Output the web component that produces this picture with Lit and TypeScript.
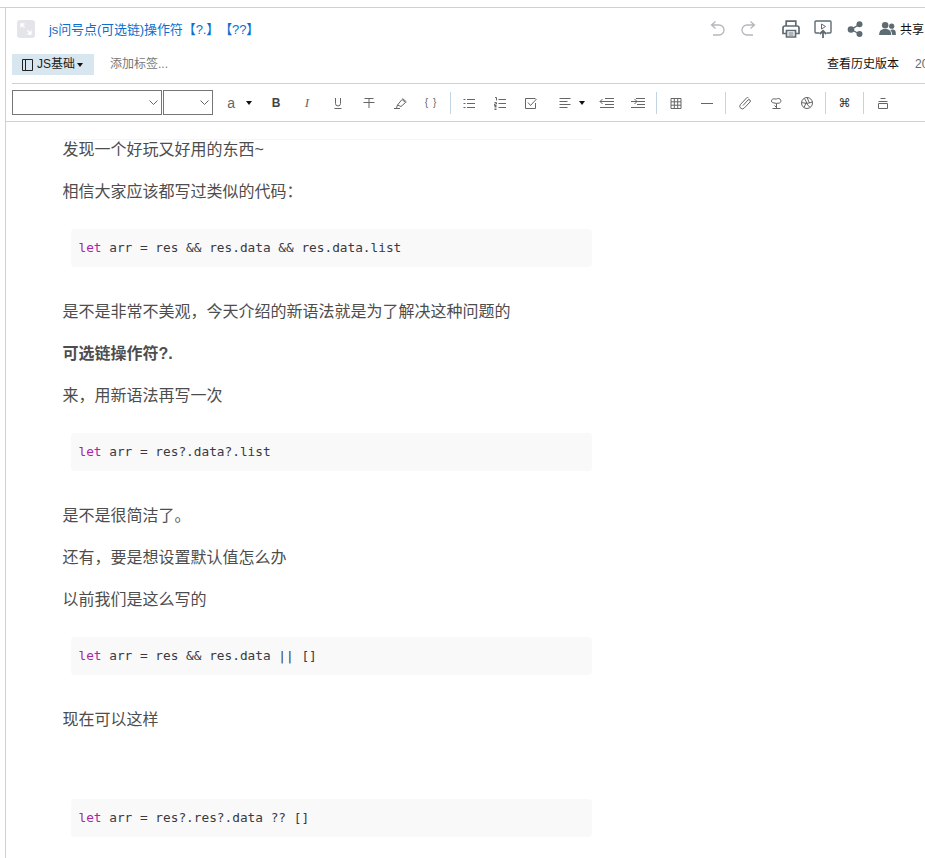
import { LitElement, css, html, svg } from 'lit';
import { customElement } from 'lit/decorators.js';

const icon = (body: unknown, w = 14, h = 14) => html`<svg width=${w} height=${h} viewBox="0 0 ${w} ${h}" fill="none" stroke="currentColor" stroke-width="1">${body}</svg>`;

const icons = {
  bold: html`<span class="glyph bold">B</span>`,
  italic: html`<span class="glyph italic">I</span>`,
  under: icon(svg`<path d="M4.500 2v5.500a2.500 2.500 0 0 0 5 0V2M3.500 12.500h7"/>`),
  strike: icon(svg`<path d="M2.500 2.500h9M7 2.500v9.500M1.500 6.500h11"/>`),
  marker: icon(svg`<path d="M4.500 9l4.500-5.500 3.500 3L8 10.500zM9.500 2.500l4 3.500M1 12.500h6M4.500 9L3.500 12"/>`),
  braces: html`<span class="glyph braces">{ }</span>`,
  ul: icon(svg`<path d="M5 3.500h8M5 7.500h8M5 11.500h8M1.500 3.500h2M1.500 7.500h2M1.500 11.500h2"/>`),
  ol: icon(svg`<path d="M5.500 3.500h7.500M5.500 7.500h7.500M5.500 11.500h7.500M2 1.500h1.500v3M1.500 6.500h2v1.500h-2v1.500h2M1.500 10.500h2M1.500 12h2M1.500 13.500h2"/>`),
  check: icon(svg`<path d="M11.500 2.500H1.500v10h10V7M4 6.500l2.500 3 6-6.500"/>`),
  align: icon(svg`<path d="M1.500 2.500h11M1.500 5.500h8M1.500 8.500h11M1.500 11.500h8"/>`),
  outdent: icon(svg`<path d="M6 2.500h9M6 8.500h9M1 11.500h14M1 5.500h14M3.500 3L1 5.500 3.500 8"/>`, 16, 14),
  indent: icon(svg`<path d="M6 2.500h9M7 8.500h8M1 11.500h14M1 5.500h14M4.500 3L7 5.500 4.500 8"/>`, 16, 14),
  table: icon(svg`<path d="M2 2.500h10v10H2zM2 5.800h10M2 9.200h10M5.300 2.500v10M8.700 2.500v10"/>`),
  rule: icon(svg`<path d="M1 7.500h12"/>`),
  clip: icon(svg`<path d="M5 9.500L10 4a1.400 1.400 0 0 1 2 2L6 12.300a2.600 2.600 0 0 1-3.700-3.600L8.500 2a1.400 1.400 0 0 1 2 0"/>`),
  image: icon(svg`<path d="M2.500 5C2.500 3 4.500 2.500 6 3s3.500-1.500 5 0 1 3.500-.5 4-4 .5-5.500 0S2.500 6.500 2.500 5zM7.500 7.500v4.500M3.500 12.500h8M5.500 9.500L7.500 11.500"/>`),
  film: icon(svg`<circle cx="7" cy="7" r="5.500"/><path d="M7 1.500L9.500 7M12.500 6L7 7.500M10 11.500L6.500 7.500M4 11.500L6.500 6M1.500 6.500L7 7.500M4.500 2.500L7 7"/>`),
  cmd: html`<span class="glyph cmd">⌘</span>`,
  stack: icon(svg`<path d="M4.500 2.500h5M2.500 5.500h9M2.500 7.500h9v5h-9z"/>`),
};

const caret = html`<span class="caret"></span>`;
const tools = (list: unknown[]) => list.map((i) => html`<button class="tool">${i}</button>`);

const groups: unknown[][] = [
  [html`<button class="tool wide font-color"><span class="glyph a">a</span>${caret}</button>`,
    ...tools([icons.bold, icons.italic, icons.under, icons.strike, icons.marker, icons.braces])],
  [...tools([icons.ul, icons.ol, icons.check]),
    html`<button class="tool wide align">${icons.align}${caret}</button>`,
    ...tools([icons.outdent, icons.indent])],
  tools([icons.table, icons.rule]),
  tools([icons.clip, icons.image, icons.film]),
  tools([icons.cmd]),
  tools([icons.stack]),
];

const code = (rest: string) => html`<pre class="code"><code><span class="kw">let</span> ${rest}</code></pre>`;

const dropdown = (cls: string) => html`
  <span class="dropdown ${cls}">
    <select><option></option></select>
    <svg width="9" height="6" viewBox="0 0 9 6" fill="none" stroke="#666" stroke-width="1"><path d="M.5.500l4 4 4-4"/></svg>
  </span>
`;

@customElement('app-root')
export class AppRoot extends LitElement {
  override render() {
    return html`
      <div class="page">
        <div class="frame">
          <header class="title-row">
            <span class="expand">
              <svg width="18" height="18" viewBox="0 0 18 18" fill="none" stroke="#fff" stroke-width="1.300"><path d="M4 4l3.500 3.500M10.500 10.500L14 14M4 7.500V4h3.500M14 10.500V14h-3.500"/></svg>
            </span>
            <span class="title">js问号点(可选链)操作符【?.】【??】</span>
            <div class="actions">
              <svg class="undo" width="18" height="18" viewBox="0 0 18 18" fill="none" stroke="#b3b6bd" stroke-width="1.300"><path d="M6.500 1.500L2.500 5l4 3.500M3 5h7a5 5 0 0 1 0 10H4"/></svg>
              <svg class="redo" width="18" height="18" viewBox="0 0 18 18" fill="none" stroke="#b3b6bd" stroke-width="1.300"><path d="M11.500 1.500l4 3.500-4 3.500M15 5H8a5 5 0 0 0 0 10h6"/></svg>
              <svg class="print" width="18" height="18" viewBox="0 0 18 18" fill="none" stroke="#5f6b73" stroke-width="1.700"><path d="M4.200 6V1.200h9.600V6"/><path d="M4 13.500H1V8a2 2 0 0 1 2-2h12a2 2 0 0 1 2 2v5.500h-3"/><path d="M4.500 10.500h9v6.500h-9z"/><path d="M6.500 13h5M6.500 15h5" stroke-width="1"/></svg>
              <svg class="present" width="18" height="18" viewBox="0 0 18 18" fill="none" stroke="#5f6b73" stroke-width="1.400"><path d="M5.500 13H2a1 1 0 0 1-1-1V2a1 1 0 0 1 1-1h14a1 1 0 0 1 1 1v10a1 1 0 0 1-1 1h-3.500"/><path d="M7.500 4v5l4-2.500z" stroke-width="1"/><path d="M9 18v-6.500M5.800 14L9 10.800l3.200 3.200" stroke-width="1.800"/></svg>
              <svg class="share" width="16" height="16" viewBox="0 0 16 16" fill="#5f6b73"><circle cx="4" cy="8.500" r="3.300"/><circle cx="12.500" cy="3.300" r="3"/><circle cx="12.500" cy="13" r="3"/><path d="M4 8.500l8.500-5.200M4 8.500l8.500 4.500" stroke="#5f6b73" stroke-width="1.400"/></svg>
              <span class="share-label">
                <svg width="17" height="13" viewBox="0 0 18 14" fill="#5f6b73"><circle cx="6.500" cy="3.500" r="3.500"/><path d="M0 14c0-5 2.500-6.500 6.500-6.500S13 9 13 14z"/><circle cx="13.500" cy="4.500" r="2.800"/><path d="M14 14c0-2-.5-4-2-5.500 1-.8 4-.8 5 .5s1 3 1 5z"/></svg>
                <span>共享</span>
              </span>
            </div>
          </header>
          <div class="tag-row">
            <span class="notebook">
              <svg width="11" height="12" viewBox="0 0 11 12" fill="none" stroke="#222" stroke-width="1"><path d="M.5.500h10v11H.5zM3.500.500v11"/></svg>
              <span>JS基础</span>
              <span class="caret"></span>
            </span>
            <span class="add-tag">添加标签...</span>
            <span class="history">查看历史版本</span>
            <span class="date">20</span>
          </div>
          <div class="toolbar">
            ${dropdown('first')}
            ${dropdown('second')}
            ${groups.map((g, i) => html`${i > 0 ? html`<span class="sep"></span>` : ''}<div class="group">${g}</div>`)}
          </div>
          <main class="doc">
            <div class="sheet">
              <p class="lead">发现一个好玩又好用的东西~</p>
              <p>相信大家应该都写过类似的代码：</p>
              ${code('arr = res && res.data && res.data.list')}
              <p>是不是非常不美观，今天介绍的新语法就是为了解决这种问题的</p>
              <p><strong>可选链操作符?.</strong></p>
              <p>来，用新语法再写一次</p>
              ${code('arr = res?.data?.list')}
              <p>是不是很简洁了。</p>
              <p>还有，要是想设置默认值怎么办</p>
              <p>以前我们是这么写的</p>
              ${code('arr = res && res.data || []')}
              <p>现在可以这样</p>
              <p class="blank"></p>
              ${code('arr = res?.res?.data ?? []')}
            </div>
          </main>
        </div>
      </div>
    `;
  }

  static override styles = css`
    :host {
      display: block;
      height: 858px;
      overflow: hidden;
      background: #fff;
      font-family: "Liberation Sans", "Noto Sans CJK SC", sans-serif;
      text-spacing-trim: space-all;
    }

    .page {
      margin-top: 7px;
      border-top: 1px solid #d0d0d0;
    }

    .frame {
      box-sizing: border-box;
      margin-left: 5px;
      height: 850px;
      border-left: 1px solid #d0d0d0;
      overflow: hidden;
    }

    .title-row {
      display: flex;
      align-items: center;
      height: 41px;
      padding-left: 11px;
      white-space: nowrap;
    }

    .expand {
      display: flex;
      align-items: center;
      justify-content: center;
      width: 18px;
      height: 18px;
      border-radius: 3px;
      background: #e4e5ea;
    }

    .title {
      margin-left: 14px;
      font-size: 13px;
      letter-spacing: -0.1px;
      color: #0b6fcf;
    }

    .actions {
      display: flex;
      align-items: center;
      margin-left: auto;
      width: 216px;
      flex: none;
    }

    .redo { margin-left: 12px; }
    .print { margin-left: 25px; }
    .present { margin-left: 14px; }
    .share { margin-left: 15px; }

    .share-label {
      display: flex;
      align-items: center;
      gap: 4px;
      margin-left: 16px;
      font-size: 12px;
      color: #111;
    }

    .tag-row {
      display: flex;
      align-items: flex-start;
      height: 35px;
      margin-left: 6px;
      padding-top: 5px;
      box-sizing: border-box;
      font-size: 12px;
      line-height: 21px;
      white-space: nowrap;
      border-bottom: 1px solid #d0d0d0;
    }

    .notebook {
      display: flex;
      align-items: center;
      gap: 4px;
      box-sizing: border-box;
      height: 21px;
      width: 82px;
      padding-left: 10px;
      background: #d8e6ef;
      color: #222;
    }

    .notebook .caret {
      margin-left: -2px;
    }

    .add-tag {
      margin-left: 16px;
      color: #777;
    }

    .history {
      margin-left: auto;
      color: #111;
    }

    .date {
      flex: none;
      width: 10px;
      margin-left: 16px;
      color: #666;
    }

    .toolbar {
      display: flex;
      align-items: center;
      height: 37px;
      padding-left: 6px;
      white-space: nowrap;
      border-bottom: 1px solid #d0d0d0;
    }

    .dropdown {
      position: relative;
      display: block;
      height: 25px;
    }

    .dropdown.first { width: 150px; margin-right: 1px; }
    .dropdown.second { width: 50px; margin-right: 3px; }

    .dropdown svg {
      position: absolute;
      top: 10px;
      right: 4px;
      pointer-events: none;
    }

    select {
      display: block;
      appearance: none;
      box-sizing: border-box;
      width: 100%;
      height: 25px;
      background: #fff;
      border: 1px solid #767676;
      border-radius: 0;
    }

    .group {
      display: flex;
      align-items: center;
    }

    .tool {
      display: flex;
      align-items: center;
      justify-content: center;
      box-sizing: border-box;
      width: 31px;
      height: 22px;
      padding: 0;
      border: 0;
      background: none;
      color: #666;
    }

    .tool.wide { width: 44.5px; gap: 11px; }
    .tool.font-color { padding-left: 3px; }
    .tool.align { padding-left: 5px; gap: 7px; }

    .glyph { font-size: 12px; line-height: 14px; }
    .glyph.a { font-size: 14px; }
    .glyph.bold { font-weight: 700; color: #444; }
    .glyph.italic { font-family: "Liberation Serif", serif; font-style: italic; font-size: 13px; }
    .glyph.braces { font-size: 10px; letter-spacing: 1px; }
    .glyph.cmd { font-family: "DejaVu Sans", sans-serif; color: #333; }

    .caret {
      width: 0;
      height: 0;
      border-left: 3.5px solid transparent;
      border-right: 3.5px solid transparent;
      border-top: 4px solid #111;
    }

    .sep {
      width: 1px;
      height: 22px;
      margin: 0 3px;
      background: #c3d5e3;
    }

    .doc {
      padding-left: 57px;
    }

    .sheet {
      width: 529px;
      margin-top: 17px;
      border-top: 1px solid #f6f6f6;
      color: #4d4d4d;
      font-size: 16px;
      line-height: 26px;
    }

    p {
      margin: 0 0 16px -0.5px;
    }

    p.lead {
      margin-top: -3px;
    }

    p.blank {
      height: 26px;
    }

    strong {
      font-weight: 700;
    }

    .code {
      box-sizing: border-box;
      height: 38px;
      margin: 24px 0 32px 8px;
      padding: 0 8px 0 7.5px;
      border-radius: 4px;
      background: #f9f9f9;
      font-family: "DejaVu Sans Mono", monospace;
      font-size: 12.78px;
      line-height: 38px;
      color: #383a42;
    }

    .kw {
      color: #a626a4;
    }
  `;
}
